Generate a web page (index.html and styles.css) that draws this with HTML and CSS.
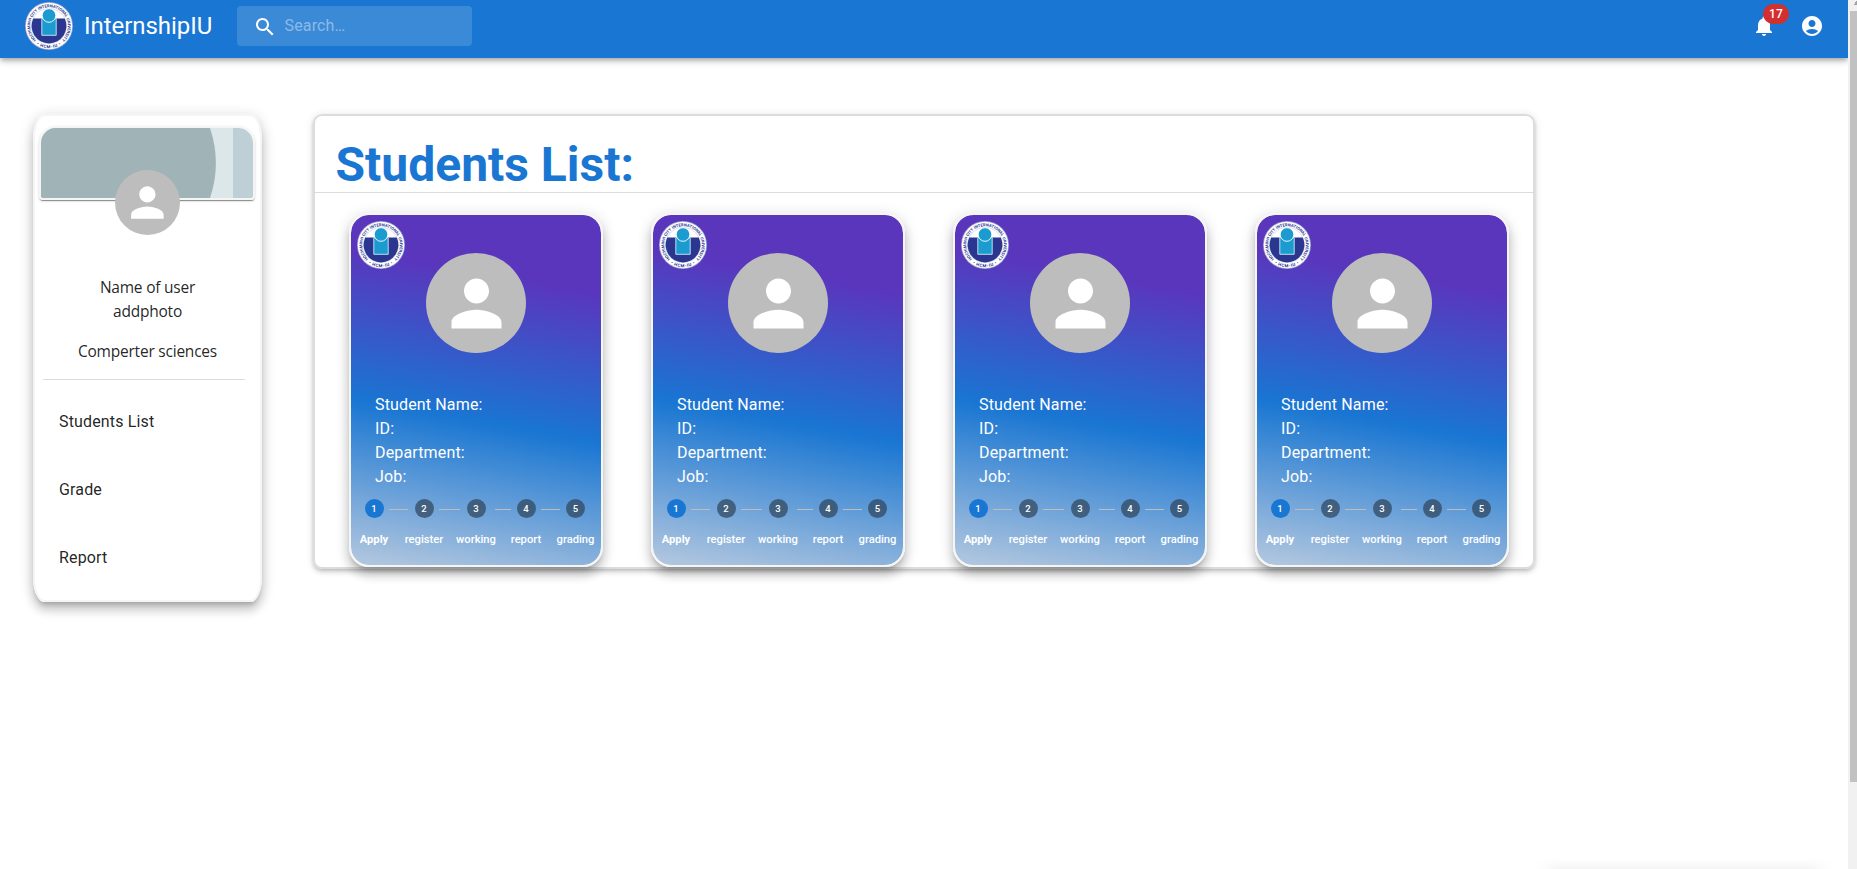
FILE: index.html
```
<!DOCTYPE html>
<html lang="en">
<head>
<meta charset="utf-8">
<title>InternshipIU</title>
<link rel="stylesheet" href="styles.css">
</head>
<body>
<svg width="0" height="0" class="defs">
  <defs>
    <path id="ring-top" d="M-13.2 13.4A18.8 18.8 0 1 1 13.2 13.4"/>
    <path id="ring-bottom" d="M-15.4 16A22.2 22.2 0 0 0 15.4 16"/>
    <symbol id="logo" viewBox="-24 -24 48 48">
      <circle r="24" fill="#9fa3d2"/>
      <circle r="23.2" fill="#fff"/>
      <circle r="17.6" fill="none" stroke="#b9bbdc" stroke-width=".5"/>
      <path d="M-15.7 -7.5H15.7A17.4 17.4 0 1 1 -15.7 -7.5Z" fill="#2b3690"/>
      <path d="M-7.2 -7.5H7.2V9.3H-7.2Z" fill="#1b9bd0" stroke="#d5e6f2" stroke-width=".9"/>
      <circle cy="-10.5" r="6.8" fill="#1b9bd0" stroke="#fff" stroke-width=".9"/>
      <text class="ring-text"><textPath href="#ring-top" startOffset="50%" text-anchor="middle">HOCHIMINH CITY INTERNATIONAL UNIVERSITY</textPath></text>
      <text class="ring-text ring-wide"><textPath href="#ring-bottom" startOffset="50%" text-anchor="middle">• HCM-IU •</textPath></text>
    </symbol>
    <symbol id="person" viewBox="0 0 24 24"><path fill="#fff" d="M12 12c2.21 0 4-1.79 4-4s-1.79-4-4-4-4 1.79-4 4 1.79 4 4 4zm0 2c-2.67 0-8 1.34-8 4v2h16v-2c0-2.66-5.33-4-8-4z"/></symbol>
  </defs>
</svg>

<header class="appbar">
  <svg class="logo"><use href="#logo"/></svg>
  <div class="brand">InternshipIU</div>
  <div class="search">
    <svg class="icon" viewBox="0 0 24 24"><path d="M15.5 14h-.79l-.28-.27C15.41 12.59 16 11.11 16 9.5 16 5.91 13.09 3 9.5 3S3 5.91 3 9.5 5.91 16 9.5 16c1.61 0 3.09-.59 4.23-1.57l.27.28v.79l5 4.99L20.49 19l-4.99-5zm-6 0C7.01 14 5 11.99 5 9.5S7.01 5 9.5 5 14 7.01 14 9.5 11.99 14 9.5 14z"/></svg>
    <span class="placeholder">Search…</span>
  </div>
  <div class="actions">
    <div class="bell">
      <svg class="icon" viewBox="0 0 24 24"><path d="M12 22c1.1 0 2-.9 2-2h-4c0 1.1.89 2 2 2zm6-6v-5c0-3.07-1.64-5.64-4.5-6.32V4c0-.83-.67-1.5-1.5-1.5s-1.5.67-1.5 1.5v.68C7.63 5.36 6 7.92 6 11v5l-2 2v1h16v-1l-2-2z"/></svg>
      <span class="badge">17</span>
    </div>
    <svg class="icon" viewBox="0 0 24 24"><path d="M12 2C6.48 2 2 6.48 2 12s4.48 10 10 10 10-4.48 10-10S17.52 2 12 2zm0 4c1.93 0 3.5 1.57 3.5 3.5S13.93 13 12 13s-3.5-1.57-3.5-3.5S10.07 6 12 6zm0 14c-2.03 0-4.43-.82-6.14-2.88C7.55 15.8 9.68 15 12 15s4.45.8 6.14 2.12C16.43 19.18 14.03 20 12 20z"/></svg>
  </div>
</header>

<main class="content">
  <aside class="sidebar">
    <svg class="banner" viewBox="0 0 212 70">
      <rect width="212" height="70" fill="#bed0d5"/>
      <rect width="192" height="70" fill="#dbe7e9"/>
      <path d="M0 0H169A110 110 0 0 1 169 70H0Z" fill="#a0b3b7"/>
    </svg>
    <div class="avatar avatar-small"><svg><use href="#person"/></svg></div>
    <div class="user">
      <p>Name of user</p>
      <p>addphoto</p>
      <p class="major">Comperter sciences</p>
    </div>
    <nav class="menu">
      <a>Students List</a>
      <a>Grade</a>
      <a>Report</a>
    </nav>
  </aside>

  <section class="panel">
    <h1 class="heading">Students List:</h1>
    <div class="cards" id="cards"></div>
  </section>
</main>

<div class="popup-shadow"></div>
<div class="scrollbar"><div class="arrow"></div><div class="thumb"></div></div>
<script src="cards.js"></script>
</body>
</html>
```
FILE: cards.js
```
const steps = ['Apply', 'register', 'working', 'report', 'grading'];
const card = `
  <article class="card">
    <svg class="logo card-logo"><use href="#logo"/></svg>
    <div class="avatar avatar-large"><svg><use href="#person"/></svg></div>
    <div class="details">
      <div>Student Name:</div><div>ID:</div><div>Department:</div><div>Job:</div>
    </div>
    <div class="stepper">
      ${steps.map((s, i) => (i ? `<i class="line line-${i}"></i>` : '') +
        `<div class="step${i ? '' : ' active'}"><b>${i + 1}</b><span>${s}</span></div>`).join('')}
    </div>
  </article>`;
document.getElementById('cards').innerHTML = card.repeat(4);
```
FILE: styles.css
```
* { box-sizing: border-box; }
html, body { height: 100%; overflow: hidden; }
body { margin: 0; position: relative; background: #fff; font-family: Roboto, "Liberation Sans", sans-serif; font-size: 16px; color: rgba(0,0,0,.87); }
p { margin: 0; }
.defs { position: absolute; }
.logo { width: 48px; height: 48px; flex: none; display: block; }
.ring-text { font: bold 4.1px Roboto, sans-serif; fill: #2b3690; }
.ring-wide { font-size: 4.4px; letter-spacing: .5px; }
.icon { width: 24px; height: 24px; fill: #fff; flex: none; display: block; }

.appbar { position: relative; width: 1848px; height: 58px; padding: 2px 24px 0 25px; display: flex; align-items: flex-start; background: #1976d2; color: #fff; box-shadow: 0 2px 4px -1px rgba(0,0,0,.2), 0 4px 5px rgba(0,0,0,.14), 0 1px 10px rgba(0,0,0,.12); }
.brand { width: 128px; margin: 8px 25px 0 11px; font-size: 24px; line-height: 32px; letter-spacing: -.05px; white-space: nowrap; }
.search { width: 235px; height: 40px; margin-top: 4px; padding-left: 16px; display: flex; align-items: center; background: rgba(255,255,255,.15); border-radius: 4px; }
.search .icon { position: relative; top: 1px; }
.placeholder { margin-left: 7.5px; color: rgba(255,255,255,.42); line-height: 22px; letter-spacing: .15px; }
.actions { display: flex; gap: 24px; margin: 12px 0 0 auto; }
.bell { position: relative; }
.badge { position: absolute; left: 11px; top: -10px; width: 26px; height: 20px; border-radius: 10px; background: #d32f2f; font-size: 12px; font-weight: 500; line-height: 20px; text-align: center; letter-spacing: .2px; }

.content { display: flex; align-items: flex-start; gap: 51px; padding: 56px 0 0 33px; }
.sidebar { width: 229px; height: 488px; padding: 10px 4px 0; border: 2px solid #f5f5f5; border-radius: 5%; display: flex; flex-direction: column; box-shadow: 0 5px 5px -3px rgba(0,0,0,.2), 0 8px 10px 1px rgba(0,0,0,.14), 0 3px 14px 2px rgba(0,0,0,.12); }
.banner { display: block; width: 216px; height: 74px; border: 2px solid #f5f5f5; border-radius: 17px 17px 4px 4px; box-shadow: 0 2px 1px -1px rgba(0,0,0,.3), 0 1px 1px rgba(0,0,0,.16), 0 1px 3px rgba(0,0,0,.12); }
.avatar { display: flex; align-items: center; justify-content: center; border-radius: 50%; background: #bdbdbd; }
.avatar svg { width: 75%; height: 75%; }
.avatar-small { position: relative; width: 65px; height: 65px; margin: -30px 0 0 76px; flex: none; }
.user { width: 202px; height: 145px; margin-left: 4px; padding: 40px 0 0 7px; border-bottom: 1px solid #dcdcdc; text-align: center; font-family: "Open Sans", "Noto Sans", sans-serif; font-size: 15.5px; line-height: 24px; letter-spacing: -.22px; white-space: nowrap; }
.major { margin-top: 16px; }
.menu { display: flex; flex-direction: column; padding: 8px 0 0 20px; }
.menu a { height: 68px; line-height: 68px; letter-spacing: .15px; }

.panel { width: 1222px; height: 455px; border: 2px solid #dcdcdc; border-radius: 9px; box-shadow: 0 2px 4px -1px rgba(0,0,0,.2), 0 4px 5px rgba(0,0,0,.07), 0 1px 10px rgba(0,0,0,.1); }
.heading { height: 77px; margin: 0; padding: 21px 0 0 20.5px; border-bottom: 1px solid #dcdcdc; color: #1976d2; font-size: 48px; line-height: 56px; font-weight: 700; }
.cards { display: flex; gap: 48px; padding: 20px 0 0 34px; }
.card { position: relative; width: 254px; height: 354px; flex: none; padding-top: 38px; border: 2px solid #f5f5f5; border-radius: 20px; background: linear-gradient(10deg, #b4c8df, #1976d2 42%, #5a36bd 80%) padding-box; color: #fff; box-shadow: 0 5px 5px -3px rgba(0,0,0,.2), 0 8px 10px 1px rgba(0,0,0,.14), 0 3px 14px 2px rgba(0,0,0,.12); }
.card-logo { position: absolute; left: 6px; top: 6px; }
.avatar-large { width: 100px; height: 100px; margin: 0 auto; }
.details { padding: 40px 0 0 24px; line-height: 24px; letter-spacing: .15px; }
.stepper { display: flex; height: 60px; padding: 10px 6px 0 9px; font-size: 11.2px; font-weight: 500; }
.step { width: 28px; display: flex; flex-direction: column; align-items: center; flex: none; white-space: nowrap; }
.step b { width: 19px; height: 19px; border-radius: 50%; background: rgba(50,72,95,.74); font-size: 9.5px; font-weight: 500; line-height: 19px; text-align: center; }
.step span { margin-top: 13px; line-height: 18px; }
.step.active b { background: #1976d2; }
.step.active span { font-weight: 700; }
.line { height: 1px; margin: 10px 1px 0; background: #bdbdbd; flex: none; }
.line-1 { width: 19px; margin-right: 2px; }
.line-2 { width: 21px; margin-right: 2px; }
.line-3 { width: 16px; margin-left: 5px; }
.line-4 { width: 19px; margin-right: 1.5px; }

.popup-shadow { position: absolute; left: 1534px; bottom: 0; width: 300px; height: 10px; background: linear-gradient(transparent, rgba(0,0,0,.045)); mask-image: linear-gradient(90deg, transparent, #000 28px calc(100% - 28px), transparent); }
.scrollbar { position: absolute; right: 0; top: 0; width: 9px; height: 100%; padding-left: 2px; background: #f1f1f1; overflow: hidden; }
.arrow { width: 7px; height: 11px; background: linear-gradient(135deg, transparent 50%, #a3a3a3 50%) 2px 0 / 7px 5px no-repeat; }
.thumb { height: 771px; background: #c1c1c1; }
```
